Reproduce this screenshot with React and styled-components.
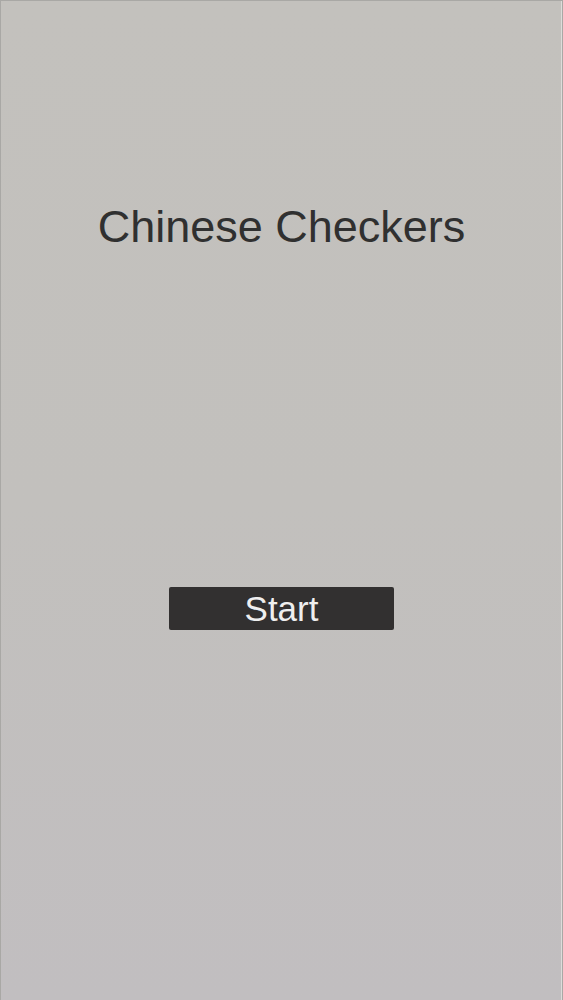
import React from 'react';
import styled, { createGlobalStyle } from 'styled-components';

const GlobalStyle = createGlobalStyle`
  html, body {
    margin: 0;
    padding: 0;
    height: 100%;
  }
  body {
    font-family: "Liberation Sans", Arial, sans-serif;
    background: #c1bfbe;
  }
  #root {
    height: 100%;
  }
`;

const Screen = styled.div`
  box-sizing: border-box;
  height: 1000px;
  display: flex;
  flex-direction: column;
  align-items: center;
  background: linear-gradient(180deg, #c3c1bd 0%, #c2c0bd 50%, #c1bec0 100%);
  border: 1px solid #a9a8a5;
  border-bottom: none;
  box-shadow: inset -1px 0 0 #dddcda;
`;

const Title = styled.h1`
  margin: 196px 0 0;
  font-size: 45px;
  font-weight: 400;
  line-height: 60px;
  color: #303030;
  letter-spacing: 0;
`;

const StartButton = styled.button`
  margin-top: 330px;
  width: 225px;
  height: 43px;
  padding: 0;
  border: none;
  border-radius: 2px;
  background: #323030;
  color: #efefef;
  font-family: "Liberation Sans", Arial, sans-serif;
  font-size: 35px;
  line-height: 43px;
  cursor: pointer;
`;

const App = () => (
  <>
    <GlobalStyle />
    <Screen>
      <Title>Chinese Checkers</Title>
      <StartButton>Start</StartButton>
    </Screen>
  </>
);

export default App;
